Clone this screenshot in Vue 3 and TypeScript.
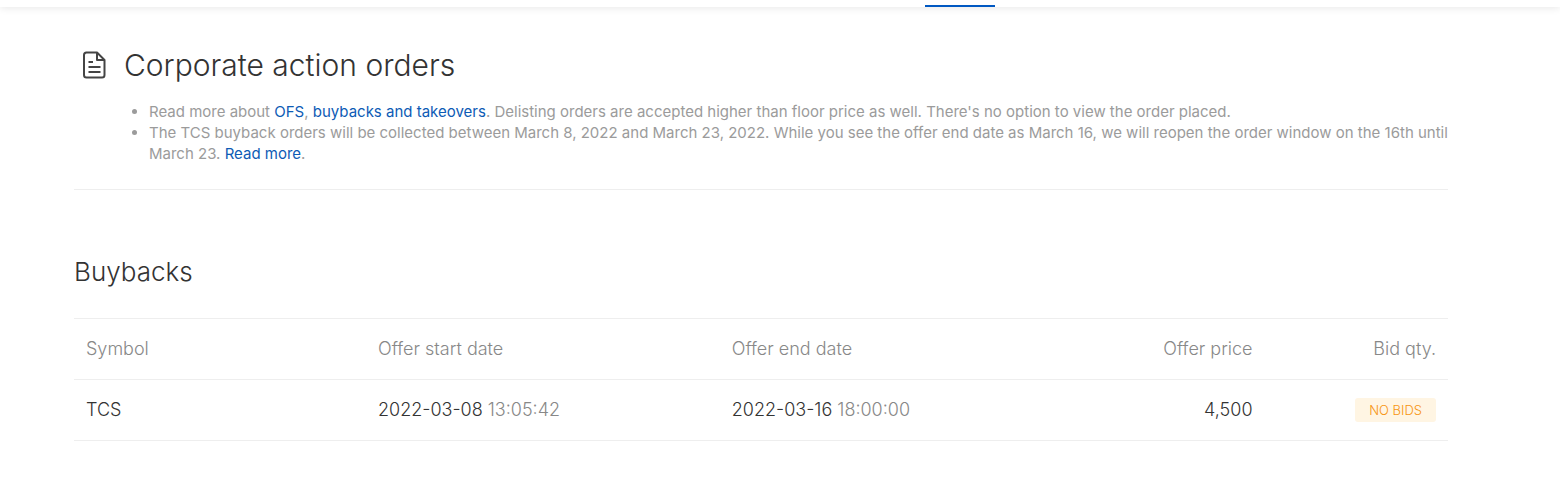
<script setup lang="ts">
interface Buyback {
  symbol: string
  startDate: string
  startTime: string
  endDate: string
  endTime: string
  price: string
  status: string
}

const buybacks: Buyback[] = [
  {
    symbol: 'TCS',
    startDate: '2022-03-08',
    startTime: '13:05:42',
    endDate: '2022-03-16',
    endTime: '18:00:00',
    price: '4,500',
    status: 'NO BIDS',
  },
]
</script>

<template>
  <div class="page">
    <nav class="topbar" aria-label="Main"><span class="active-tab"></span></nav>
    <main class="content">
      <header class="intro">
        <svg class="doc-icon" viewBox="0 0 24 28" fill="none" stroke="currentColor" stroke-width="2" stroke-linejoin="round" aria-hidden="true">
          <path d="M4 1.5H15L22.5 9V24Q22.5 26.5 20 26.5H4.500Q2 26.500 2 24V4Q2 1.500 4.500 1.500Z" />
          <path d="M15 2V9H22" />
          <path d="M6.500 11H11M6.500 16H18.500M6.500 21H18.500" />
        </svg>
        <div class="intro-text">
          <h1>Corporate action orders</h1>
          <ul>
            <li>Read more about <a href="#ofs">OFS</a>, <a href="#buybacks">buybacks and takeovers</a>. Delisting orders are accepted higher than floor price as well. There's no option to view the order placed.</li>
            <li>The TCS buyback orders will be collected between March 8, 2022 and March 23, 2022. While you see the offer end date as March 16, we will reopen the order window on the 16th until March 23. <a href="#more">Read more</a>.</li>
          </ul>
        </div>
      </header>
      <section id="buybacks">
        <h2>Buybacks</h2>
        <table>
          <colgroup>
            <col class="col-symbol" /><col class="col-date" /><col class="col-date" /><col class="col-price" /><col class="col-bid" />
          </colgroup>
          <thead>
            <tr>
              <th scope="col">Symbol</th>
              <th scope="col">Offer start date</th>
              <th scope="col">Offer end date</th>
              <th scope="col" class="right">Offer price</th>
              <th scope="col" class="right">Bid qty.</th>
            </tr>
          </thead>
          <tbody>
            <tr v-for="b in buybacks" :key="b.symbol">
              <td>{{ b.symbol }}</td>
              <td>{{ b.startDate }} <span class="dim">{{ b.startTime }}</span></td>
              <td>{{ b.endDate }} <span class="dim">{{ b.endTime }}</span></td>
              <td class="right">{{ b.price }}</td>
              <td class="right"><span class="badge">{{ b.status }}</span></td>
            </tr>
          </tbody>
        </table>
      </section>
    </main>
  </div>
</template>

<style>
body {
  background: #fff;
}
</style>

<style scoped>
.page {
  font-family: Inter, "Liberation Sans", sans-serif;
  font-weight: 400;
  color: #333;
}
.topbar {
  display: flex;
  height: 7px;
  box-shadow: 0 0 8px rgba(0, 0, 0, 0.13);
}
.active-tab {
  width: 70px;
  height: 2px;
  margin-top: 5px;
  margin-left: 925px;
  background: #0058c2;
}
.content {
  margin: 0 112px 0 74px;
  padding-top: 40px;
}
.intro {
  display: flex;
  gap: 18px;
  padding: 0 0 25px 8px;
  border-bottom: 1px solid #eee;
}
.doc-icon {
  flex: none;
  width: 24px;
  height: 28px;
  margin-top: 4px;
  color: #444;
}
h1 {
  margin: 0 0 18px;
  font-size: 30px;
  line-height: 36px;
  font-weight: 300;
}
ul {
  margin: 0;
  padding-left: 25px;
  font-size: 15px;
  line-height: 21px;
  color: #9b9b9b;
}
a {
  color: #0d5bb5;
  text-decoration: none;
}
h2 {
  margin: 64px 0 28px;
  font-size: 26px;
  line-height: 36px;
  font-weight: 300;
}
table {
  width: 100%;
  table-layout: fixed;
  border-collapse: collapse;
  border-top: 1px solid #eee;
  font-size: 18px;
  line-height: 24px;
}
th,
td {
  height: 24px;
  padding: 18px 12px;
  border-bottom: 1px solid #eee;
  font-weight: 300;
  text-align: left;
}
th,
.dim {
  color: #888;
}
.right {
  text-align: right;
}
.col-symbol {
  width: 21.25%;
}
.col-date {
  width: 25.75%;
}
.col-price {
  width: 13.9%;
}
.badge {
  display: inline-block;
  padding: 0 14px;
  border-radius: 3px;
  background: #fff5e3;
  color: #f79410;
  font-size: 13px;
  line-height: 24px;
  font-weight: 300;
  vertical-align: top;
}
</style>
